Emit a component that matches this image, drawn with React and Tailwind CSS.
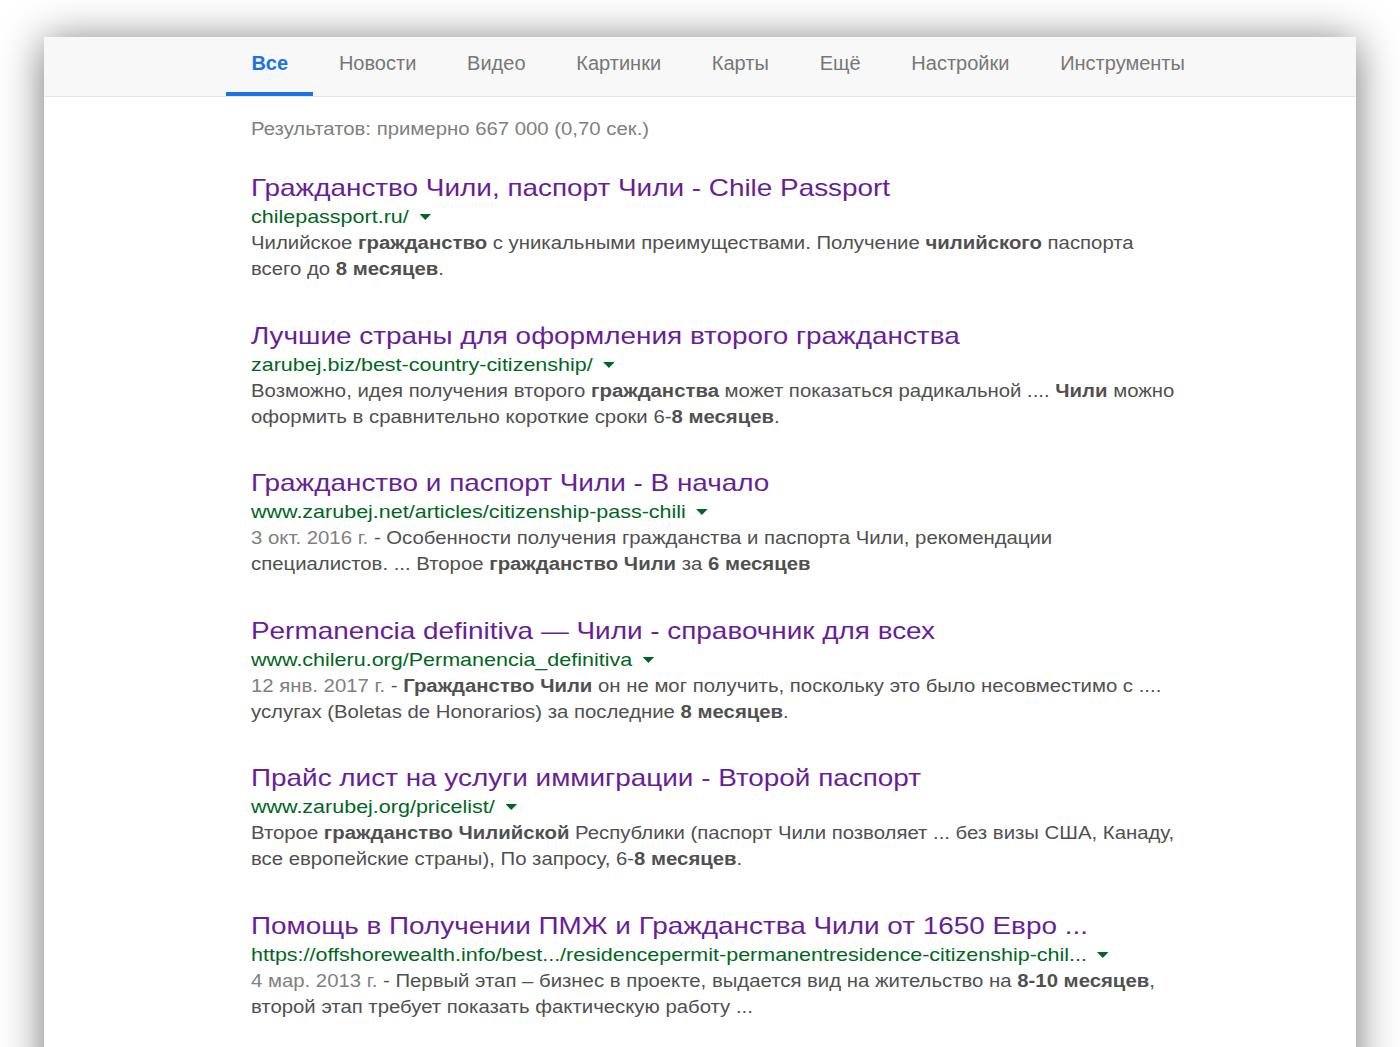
import React from "react";

const tabs = ["Все", "Новости", "Видео", "Картинки", "Карты", "Ещё", "Настройки", "Инструменты"];

const B = ({ children }) => <b className="font-bold text-[#505050]">{children}</b>;
const D = ({ children }) => <span className="text-[#808080]">{children}</span>;

const results = [
  {
    title: "Гражданство Чили, паспорт Чили - Chile Passport",
    url: "chilepassport.ru/",
    lines: [
      <>Чилийское <B>гражданство</B> с уникальными преимуществами. Получение <B>чилийского</B> паспорта</>,
      <>всего до <B>8 месяцев</B>.</>,
    ],
  },
  {
    title: "Лучшие страны для оформления второго гражданства",
    url: "zarubej.biz/best-country-citizenship/",
    lines: [
      <>Возможно, идея получения второго <B>гражданства</B> может показаться радикальной .... <B>Чили</B> можно</>,
      <>оформить в сравнительно короткие сроки 6-<B>8 месяцев</B>.</>,
    ],
  },
  {
    title: "Гражданство и паспорт Чили - В начало",
    url: "www.zarubej.net/articles/citizenship-pass-chili",
    lines: [
      <><D>3 окт. 2016 г.</D> - Особенности получения гражданства и паспорта Чили, рекомендации</>,
      <>специалистов. ... Второе <B>гражданство Чили</B> за <B>6 месяцев</B></>,
    ],
  },
  {
    title: "Permanencia definitiva — Чили - справочник для всех",
    url: "www.chileru.org/Permanencia_definitiva",
    lines: [
      <><D>12 янв. 2017 г.</D> - <B>Гражданство Чили</B> он не мог получить, поскольку это было несовместимо с ....</>,
      <>услугах (Boletas de Honorarios) за последние <B>8 месяцев</B>.</>,
    ],
  },
  {
    title: "Прайс лист на услуги иммиграции - Второй паспорт",
    url: "www.zarubej.org/pricelist/",
    lines: [
      <>Второе <B>гражданство Чилийской</B> Республики (паспорт Чили позволяет ... без визы США, Канаду,</>,
      <>все европейские страны), По запросу, 6-<B>8 месяцев</B>.</>,
    ],
  },
  {
    title: "Помощь в Получении ПМЖ и Гражданства Чили от 1650 Евро ...",
    url: "https://offshorewealth.info/best.../residencepermit-permanentresidence-citizenship-chil...",
    lines: [
      <><D>4 мар. 2013 г.</D> - Первый этап – бизнес в проекте, выдается вид на жительство на <B>8-10 месяцев</B>,</>,
      <>второй этап требует показать фактическую работу ...</>,
    ],
  },
];

function Caret() {
  return (
    <svg width="10" height="6.5" viewBox="0 0 11 7" className="ml-[9px] mt-[2px]">
      <path d="M0 0 L11 0 L5.5 6.5 Z" fill="#006621" />
    </svg>
  );
}

export default function App() {
  return (
    <div
      className="w-[1400px] h-[1047px] overflow-hidden bg-white pt-[37px] px-[44px]"
      style={{ fontFamily: '"Liberation Sans", Arial, sans-serif' }}
    >
      <div className="bg-white h-[1100px] shadow-[0_4px_40px_rgba(0,0,0,0.55)]">
        <div className="h-[60px] bg-[#f8f8f8] border-b border-[#e6e6e6] flex pl-[182px]">
          {tabs.map((t, i) => (
            <div
              key={t}
              className={
                i === 0
                  ? "relative px-[25.4px] flex items-center text-[20px] font-bold text-[#1a73e8]"
                  : "relative px-[25.4px] flex items-center text-[20px] text-[#777777]"
              }
            >
              <span className="-mt-[8px]">{t}</span>
              {i === 0 && <div className="absolute left-0 right-0 bottom-0 h-[4px] bg-[#1a73e8]" />}
            </div>
          ))}
        </div>
        <div className="pl-[207px] pt-[19px]">
          <div className="origin-top-left scale-x-[1.162]">
            <div className="text-[17.5px] leading-[26px] text-[#808080]">Результатов: примерно 667 000 (0,70 сек.)</div>
            <div className="pt-[31px] flex flex-col gap-[38.5px]">
              {results.map((r, i) => (
                <div key={i} className="whitespace-nowrap">
                  <div className="text-[24px] leading-[30px] text-[#681e98]">{r.title}</div>
                  <div className="flex items-center text-[18.5px] leading-[27px] text-[#006621]">
                    <span>{r.url}</span>
                    <Caret />
                  </div>
                  <div className="text-[17.5px] leading-[26px] text-[#505050]">
                    {r.lines.map((l, j) => (
                      <div key={j}>{l}</div>
                    ))}
                  </div>
                </div>
              ))}
            </div>
          </div>
        </div>
      </div>
    </div>
  );
}
